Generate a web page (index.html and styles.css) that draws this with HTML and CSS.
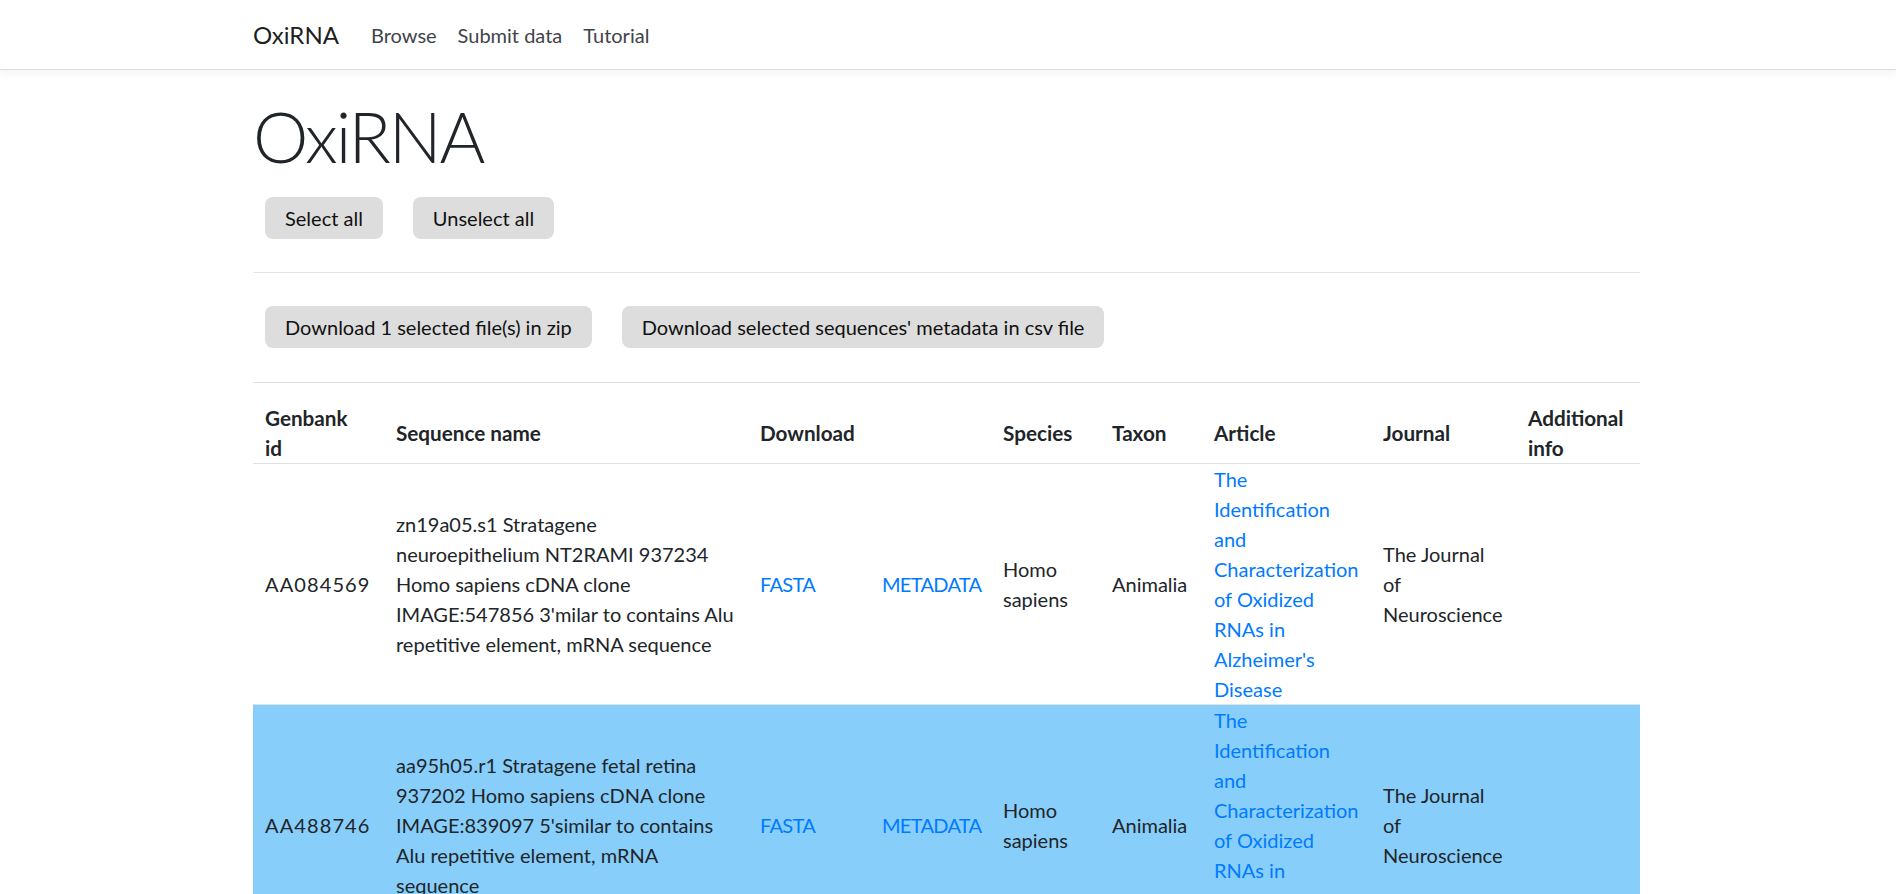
FILE: index.html
```html
<!DOCTYPE html>
<html lang="en">
<head>
<meta charset="utf-8">
<title>OxiRNA</title>
<link rel="stylesheet" href="styles.css">
</head>
<body>
<nav class="navbar">
  <div class="container nav-inner">
    <a class="brand" href="#">OxiRNA</a>
    <a class="nav-link" href="#">Browse</a>
    <a class="nav-link" href="#">Submit data</a>
    <a class="nav-link" href="#">Tutorial</a>
  </div>
</nav>
<main class="container">
  <h1 class="display">OxiRNA</h1>
  <div class="btn-row">
    <button class="btn">Select all</button>
    <button class="btn">Unselect all</button>
  </div>
  <hr class="sep">
  <div class="btn-row">
    <button class="btn">Download 1 selected file(s) in zip</button>
    <button class="btn">Download selected sequences' metadata in csv file</button>
  </div>
  <table class="table">
    <colgroup>
      <col class="c-id"><col class="c-name"><col class="c-fasta"><col class="c-meta"><col class="c-species"><col class="c-taxon"><col class="c-article"><col class="c-journal"><col class="c-info">
    </colgroup>
    <thead>
      <tr>
        <th class="th-id">Genbank id</th>
        <th>Sequence name</th>
        <th colspan="2">Download</th>
        <th>Species</th>
        <th>Taxon</th>
        <th>Article</th>
        <th>Journal</th>
        <th>Additional info</th>
      </tr>
    </thead>
    <tbody>
      <tr>
        <td class="gid">AA084569</td>
        <td>zn19a05.s1 Stratagene neuroepithelium NT2RAMI 937234 Homo sapiens cDNA clone IMAGE:547856 3'milar to contains Alu repetitive element, mRNA sequence</td>
        <td><a class="caps" href="#">FASTA</a></td>
        <td><a class="caps" href="#">METADATA</a></td>
        <td>Homo sapiens</td>
        <td>Animalia</td>
        <td><a href="#">The Identification and Characterization of Oxidized RNAs in Alzheimer's Disease</a></td>
        <td>The Journal of Neuroscience</td>
        <td></td>
      </tr>
      <tr class="selected">
        <td class="gid">AA488746</td>
        <td>aa95h05.r1 Stratagene fetal retina 937202 Homo sapiens cDNA clone IMAGE:839097 5'similar to contains Alu repetitive element, mRNA sequence</td>
        <td><a class="caps" href="#">FASTA</a></td>
        <td><a class="caps" href="#">METADATA</a></td>
        <td>Homo sapiens</td>
        <td>Animalia</td>
        <td><a href="#">The Identification and Characterization of Oxidized RNAs in Alzheimer's Disease</a></td>
        <td>The Journal of Neuroscience</td>
        <td></td>
      </tr>
    </tbody>
  </table>
</main>
</body>
</html>
```
FILE: styles.css
```css
* { box-sizing: border-box; }
html, body { margin: 0; padding: 0; }
body {
  font-family: "Segoe UI", Lato, "Liberation Sans", sans-serif;
  font-size: 20px;
  line-height: 1.5;
  color: #212529;
  background: #fff;
}
a { color: #007bff; text-decoration: none; }
.container { width: 1387px; margin-left: calc(50% - 695px); }

.navbar {
  height: 70px;
  background: #fff;
  border-bottom: 1px solid #dcdcdc;
  box-shadow: 0 3px 10px rgba(0,0,0,0.05);
}
.nav-inner { display: flex; align-items: center; height: 69px; }
.brand {
  font-size: 24px;
  color: rgba(0,0,0,0.9);
  margin-right: 21px;
}
.nav-link {
  color: #3f444a;
  padding: 0 10px 0 11px;
}
.nav-link + .nav-link { padding-left: 11px; }

.display {
  font-size: 70px;
  font-weight: 300;
  line-height: 1.2;
  letter-spacing: -2.2px;
  margin: 24px 0 19px;
}
.btn-row {
  display: flex;
  gap: 30px;
  padding-left: 12px;
}
.btn {
  font-family: inherit;
  font-size: 20px;
  line-height: 42px;
  height: 42px;
  padding: 0 20px;
  background: #dddddd;
  color: #111;
  border: none;
  border-radius: 8px;
}
.sep {
  border: 0;
  border-top: 1px solid #e4e4e4;
  margin: 33px 0 33px;
}
.table {
  width: 1387px;
  table-layout: fixed;
  border-collapse: collapse;
  margin-top: 34px;
}
.c-id { width: 131px; }
.c-name { width: 364px; }
.c-fasta { width: 122px; }
.c-meta { width: 121px; }
.c-species { width: 109px; }
.c-taxon { width: 102px; }
.c-article { width: 169px; }
.c-journal { width: 145px; }
.c-info { width: 124px; }
.table th, .table td {
  text-align: left;
  vertical-align: middle;
  padding: 0 12px;
  line-height: 30px;
  border-top: 1px solid #dee2e6;
}
.table th {
  font-weight: 700;
  font-size: 20.7px;
  padding-top: 20px;
  border-bottom: 1px solid #dee2e6;
}
.table th.th-id { padding-right: 22px; }
.gid { letter-spacing: 1.1px; }
.caps { letter-spacing: -0.7px; }
.table tr.selected td { background: #87cefa; }
```
